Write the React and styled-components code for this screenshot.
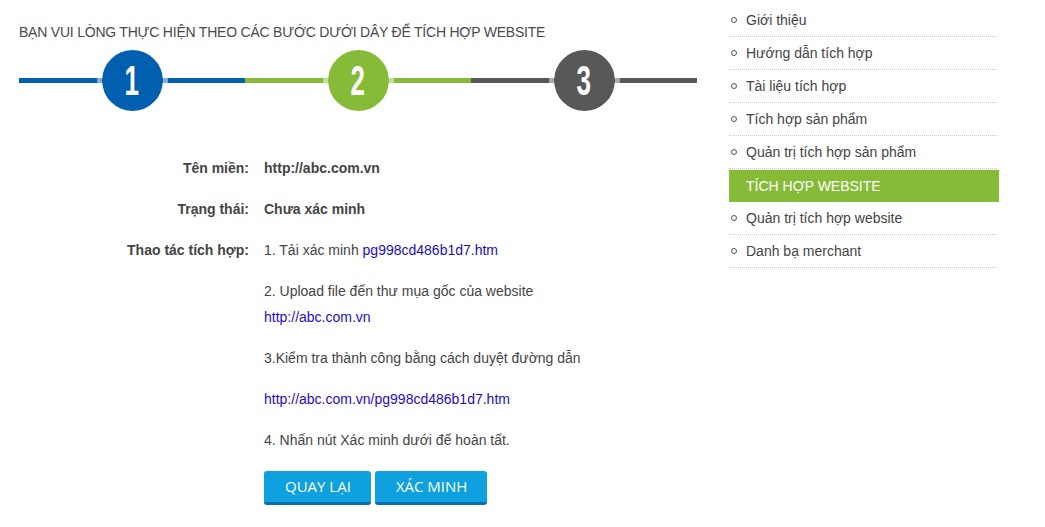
import React from "react";
import styled, { createGlobalStyle } from "styled-components";

const Global = createGlobalStyle`
  html, body { margin: 0; padding: 0; background: #fff; }
  body { font-family: "Liberation Sans", Arial, sans-serif; font-size: 14px; color: #444; }
`;

const Page = styled.div`
  display: flex;
  align-items: flex-start;
  gap: 32px;
  padding-left: 19px;
`;

const Main = styled.div`
  width: 678px;
  display: flex;
  flex-direction: column;
`;

const Title = styled.h2`
  margin: 22px 0 3px;
  font-size: 14px;
  line-height: 20px;
  font-weight: normal;
  letter-spacing: -0.22px;
  text-transform: uppercase;
  color: #4a4a4a;
`;

const Steps = styled.div`
  display: flex;
  height: 70px;
`;

const Segment = styled.div`
  width: 226px;
  display: flex;
  align-items: center;
  justify-content: center;
  background: linear-gradient(${(p) => p.$color}, ${(p) => p.$color}) center / 100% 5px no-repeat;
`;

const Circle = styled.div`
  width: 61px;
  height: 61px;
  border-radius: 50%;
  border: 5px solid rgba(255, 255, 255, 0.5);
  background: ${(p) => p.$color};
  background-clip: padding-box;
  display: flex;
  align-items: center;
  justify-content: center;
`;

const Num = styled.span`
  color: #fff;
  font-family: "Liberation Sans", sans-serif;
  font-weight: bold;
  font-size: 42px;
  line-height: 1;
  transform: scaleX(0.62);
  margin-top: 2px;
`;

const Form = styled.div`
  margin-top: 40px;
  display: grid;
  grid-template-columns: 230px 1fr;
  column-gap: 15px;
  row-gap: 15px;
  line-height: 26px;
`;

const Label = styled.div`
  text-align: right;
  font-weight: bold;
  color: #444;
`;

const Value = styled.div`
  font-weight: ${(p) => (p.$bold ? "bold" : "normal")};
  color: #444;
`;

const StepList = styled.div`
  display: flex;
  flex-direction: column;
  gap: 15px;
`;

const Link = styled.a`
  color: #1a0dcc;
  text-decoration: none;
`;

const Buttons = styled.div`
  display: flex;
  gap: 4px;
  margin-top: 3px;
`;

const Button = styled.button`
  height: 34px;
  padding: 0 20px 0 21px;
  border: none;
  border-bottom: 3px solid #0a6cb4;
  border-radius: 3px;
  background: #0ea0df;
  color: #fff;
  font-family: "Open Sans", "Liberation Sans", sans-serif;
  font-size: 15px;
  text-transform: uppercase;
  cursor: pointer;
  line-height: 31px;
`;

const Side = styled.ul`
  list-style: none;
  margin: 4px 0 0;
  padding: 0;
  width: 270px;
`;

const Item = styled.li`
  height: 32px;
  display: flex;
  align-items: center;
  border-bottom: 1px dotted #c8c8c8;
  margin-right: 2px;
  color: #444;
  &::before {
    content: "";
    width: 4px;
    height: 4px;
    border: 1px solid #555;
    border-radius: 50%;
    margin: 0 9px 0 2px;
  }
`;

const Active = styled.li`
  height: 32px;
  margin-top: 1px;
  display: flex;
  align-items: center;
  padding-left: 17px;
  background: #86bb38;
  color: #fff;
  text-transform: uppercase;
`;

const steps = [
  { n: 1, color: "#005fae" },
  { n: 2, color: "#86bb38" },
  { n: 3, color: "#585858" },
];

export default function App() {
  return (
    <>
      <Global />
      <Page>
        <Main>
          <Title>Bạn vui lòng thực hiện theo các bước dưới dây để tích hợp website</Title>
          <Steps>
            {steps.map((s) => (
              <Segment key={s.n} $color={s.color}>
                <Circle $color={s.color}>
                  <Num>{s.n}</Num>
                </Circle>
              </Segment>
            ))}
          </Steps>
          <Form>
            <Label>Tên miền:</Label>
            <Value $bold>http://abc.com.vn</Value>
            <Label>Trạng thái:</Label>
            <Value $bold>Chưa xác minh</Value>
            <Label>Thao tác tích hợp:</Label>
            <StepList>
              <Value>
                1. Tải xác minh <Link href="#">pg998cd486b1d7.htm</Link>
              </Value>
              <Value>
                2. Upload file đến thư mụa gốc của website
                <br />
                <Link href="#">http://abc.com.vn</Link>
              </Value>
              <Value>3.Kiểm tra thành công bằng cách duyệt đường dẫn</Value>
              <Value>
                <Link href="#">http://abc.com.vn/pg998cd486b1d7.htm</Link>
              </Value>
              <Value>4. Nhấn nút Xác minh dưới để hoàn tất.</Value>
              <Buttons>
                <Button>Quay lại</Button>
                <Button>Xác minh</Button>
              </Buttons>
            </StepList>
          </Form>
        </Main>
        <Side>
          <Item>Giới thiệu</Item>
          <Item>Hướng dẫn tích hợp</Item>
          <Item>Tài liệu tích hợp</Item>
          <Item>Tích hợp sản phẩm</Item>
          <Item>Quản trị tích hợp sản phẩm</Item>
          <Active>Tích hợp website</Active>
          <Item>Quản trị tích hợp website</Item>
          <Item>Danh bạ merchant</Item>
        </Side>
      </Page>
    </>
  );
}
